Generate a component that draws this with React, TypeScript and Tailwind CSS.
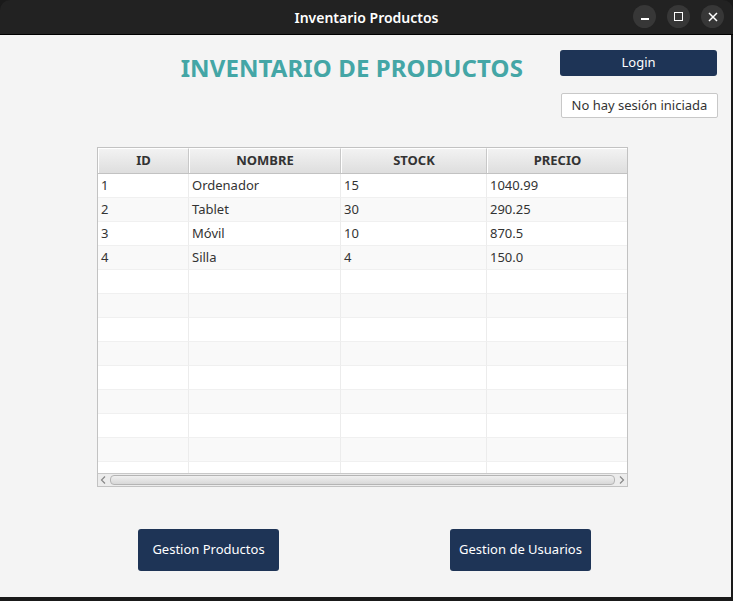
import React from 'react'

const productos = [
  { id: '1', nombre: 'Ordenador', stock: '15', precio: '1040.99' },
  { id: '2', nombre: 'Tablet', stock: '30', precio: '290.25' },
  { id: '3', nombre: 'Móvil', stock: '10', precio: '870.5' },
  { id: '4', nombre: 'Silla', stock: '4', precio: '150.0' },
]

const cols = ['w-[91px]', 'w-[152px]', 'w-[146px]', 'flex-1']
const headers = ['ID', 'NOMBRE', 'STOCK', 'PRECIO']

const App: React.FC = () => {
  const rows = [...productos, ...Array.from({ length: 9 }, () => null)]

  return (
    <div className="w-[733px] h-[601px] bg-[#1a1a1a] flex flex-col" style={{ fontFamily: '"Noto Sans", "Open Sans", sans-serif' }}>
      {/* barra de titulo */}
      <div className="h-[35px] bg-[#222222] rounded-t-[10px] flex items-center relative border-b border-black">
        <div className="flex-1 text-center text-white text-[14px] font-semibold">Inventario Productos</div>
        <div className="absolute right-[9px] top-[5px] flex gap-[11px]">
          <div className="w-[23px] h-[23px] rounded-full bg-[#373737] flex items-center justify-center">
            <div className="w-[8px] h-[1.5px] bg-white mt-[5px]" />
          </div>
          <div className="w-[23px] h-[23px] rounded-full bg-[#373737] flex items-center justify-center">
            <div className="w-[9px] h-[9px] border-[1.5px] border-white" />
          </div>
          <div className="w-[23px] h-[23px] rounded-full bg-[#373737] flex items-center justify-center">
            <svg width="10" height="10" viewBox="0 0 10 10" stroke="white" strokeWidth="1.5">
              <path d="M1 1L9 9M9 1L1 9" />
            </svg>
          </div>
        </div>
      </div>

      {/* contenido */}
      <div className="w-[731px] h-[562px] bg-[#f4f4f4] flex flex-col">
        <div className="flex pt-[15px]">
          <div className="w-[560px] flex justify-end pr-[37px] pt-[1px]">
            <h1 className="text-[24px] font-bold text-[#44a6a6] leading-[33px] tracking-[0.1px]">INVENTARIO DE PRODUCTOS</h1>
          </div>
          <div className="flex flex-col">
            <button className="w-[157px] h-[26px] bg-[#1e3456] text-white text-[13px] rounded-[3px]">Login</button>
            <div className="ml-[1px] mt-[17px] w-[157px] h-[25px] bg-white border border-[#c8c8c8] rounded-[2px] text-[13px] text-[#333] flex items-center justify-center">
              No hay sesión iniciada
            </div>
          </div>
        </div>

        {/* tabla */}
        <div className="ml-[97px] mt-[29px] w-[531px] h-[340px] border border-[#c2c2c2] bg-white flex flex-col">
          <div className="h-[26px] flex bg-gradient-to-b from-[#f3f3f3] to-[#dedede] border-b border-[#c2c2c2]">
            {headers.map((h, i) => (
              <div
                key={h}
                className={`${cols[i]} ${i < 3 ? 'border-r border-[#c8c8c8]' : ''} border-t border-l border-t-white border-l-white flex items-center justify-center text-[13px] font-bold text-[#333]`}
              >
                {h}
              </div>
            ))}
          </div>
          <div className="h-[299px] overflow-hidden">
            {rows.map((p, r) => (
              <div key={r} className={`h-[24px] flex ${r % 2 === 0 ? 'bg-white' : 'bg-[#f9f9f9]'}`}>
                {[p?.id, p?.nombre, p?.stock, p?.precio].map((v, i) => (
                  <div
                    key={i}
                    className={`${cols[i]} ${i < 3 ? 'border-r border-[#ececec]' : ''} border-b border-b-[#f0f0f0] px-[3px] flex items-center text-[13px] text-[#333] leading-none`}
                  >
                    {v ?? ''}
                  </div>
                ))}
              </div>
            ))}
          </div>
          {/* scrollbar */}
          <div className="h-[13px] border-t border-[#c8c8c8] bg-[#ececec] flex items-center">
            <svg width="12" height="12" viewBox="0 0 12 12" className="shrink-0">
              <path d="M7 2.5L3.5 6L7 9.5" fill="none" stroke="#888" strokeWidth="1.2" />
            </svg>
            <div className="flex-1 h-[10px] rounded-[4px] border border-[#b4b4b4] bg-gradient-to-b from-[#f0f0f0] to-[#d8d8d8]" />
            <svg width="12" height="12" viewBox="0 0 12 12" className="shrink-0">
              <path d="M5 2.5L8.5 6L5 9.5" fill="none" stroke="#888" strokeWidth="1.2" />
            </svg>
          </div>
        </div>

        <div className="flex mt-[42px]">
          <button className="ml-[138px] w-[141px] h-[42px] bg-[#1e3456] text-white text-[13px] rounded-[3px]">Gestion Productos</button>
          <button className="ml-[171px] w-[141px] h-[42px] bg-[#1e3456] text-white text-[13px] rounded-[3px]">Gestion de Usuarios</button>
        </div>
      </div>
    </div>
  )
}

export default App
